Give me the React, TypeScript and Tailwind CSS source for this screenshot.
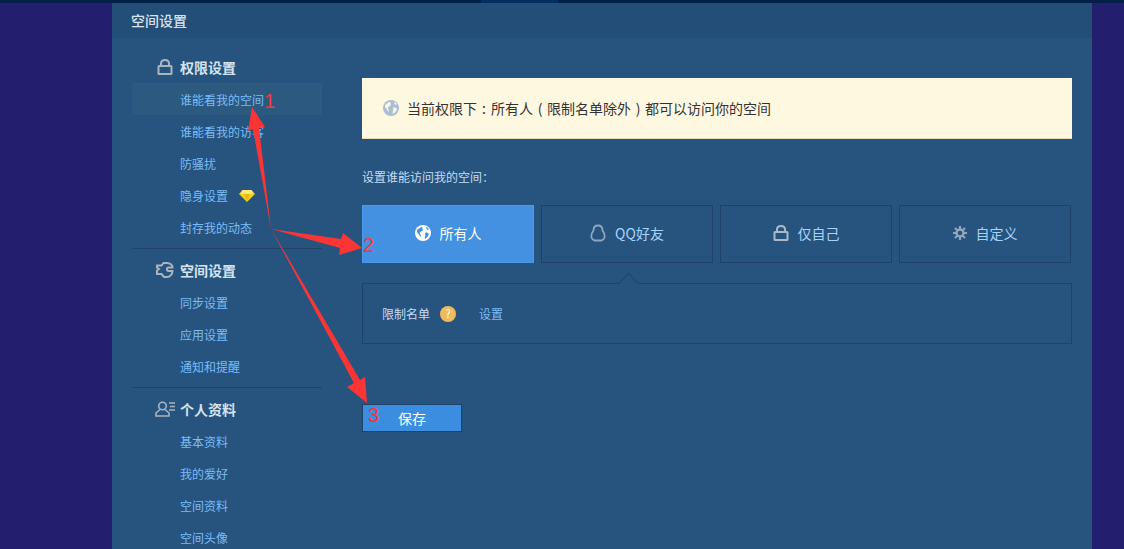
const font = { fontFamily: '"Noto Sans CJK SC", "Liberation Sans", sans-serif' }

const LockIcon = ({ color = '#a9b4bf' }: { color?: string }) => (
  <svg width="16" height="16" viewBox="0 0 16 16" fill="none" stroke={color} strokeWidth="2">
    <path d="M4 7V4.500C4 2.500 5.500 1 8 1s4 1.500 4 3.500V7" />
    <rect x="1.500" y="7" width="13" height="8" rx="0.500" />
  </svg>
)

const PluginIcon = () => (
  <svg width="18" height="16" viewBox="0 0 18 16" fill="none" stroke="#a9b4bf" strokeWidth="2">
    <path d="M1 3.500h4.500L7.500 1h3.500c3 0 5.500 2 5.500 4.500h-4c-2 0-2 3.500 0 3.500h4c0 3-2.500 6-5.500 6H8l-2.500-3H1V8.500l2-1.500-2-1.500z" />
  </svg>
)

const ProfileIcon = () => (
  <svg width="20" height="16" viewBox="0 0 20 16" fill="none" stroke="#a9b4bf" strokeWidth="1.600">
    <circle cx="7.500" cy="5" r="3.800" />
    <path d="M5 8.500 1 12v3h13v-3l-4-3.500" />
    <path d="M14 2h6M15 5.500h5M14 9h6" strokeWidth="1.500" />
  </svg>
)

const GlobeIcon = ({ fg, cut, size }: { fg: string; cut: string; size: number }) => (
  <svg width={size} height={size} viewBox="0 0 16 16">
    <circle cx="8" cy="8" r="8" fill={fg} />
    <path d="M2 5c2-1 3-3 5-3 1 1 0 2 1 3-1 2-3 1-3 3 0 1 1 2 1 4-2-1-2-3-3-4-1 0-1-2-1-3z" fill={cut} />
    <path d="M10 8c2-1 3 0 4 1-1 2-2 4-4 5-1-2 1-3 0-6zM11 2c1 0 2 1 3 2l-2 1z" fill={cut} />
  </svg>
)

const QQIcon = () => (
  <svg width="16" height="18" viewBox="0 0 16 18" fill="none" stroke="#8fa6bb" strokeWidth="1.800">
    <path d="M8 1.500c3 0 4.500 2.300 4.500 5 1.500 2 2.500 4.500 2 7-.5 1.500-1.500 2.500-3 3H4.500c-1.500-.5-2.500-1.500-3-3-.5-2.500.5-5 2-7 0-2.700 1.500-5 4.500-5z" />
  </svg>
)

const GearIcon = () => (
  <svg width="14" height="14" viewBox="0 0 14 14" fill="none" stroke="#8fa6bb">
    <circle cx="7" cy="7" r="3.500" strokeWidth="2.400" />
    <path d="M7 0v3M7 11v3M0 7h3M11 7h3M2 2l2 2M10 10l2 2M12 2l-2 2M4 10l-2 2" strokeWidth="2.200" />
  </svg>
)

const Gem = () => (
  <svg width="16" height="12" viewBox="0 0 16 12">
    <path d="M3.500 0h9L16 4 8 12 0 4z" fill="#f7cf1d" />
    <path d="M3.500 0h9L14 4H2z" fill="#ffe97a" />
    <path d="M5 4h6l-3 7z" fill="#e8b90e" />
  </svg>
)

const groups = [
  {
    title: '权限设置',
    icon: <LockIcon />,
    wrap: 'pt-[13px] pb-[5px] border-b border-[#1f4369]',
    items: ['谁能看我的空间', '谁能看我的访客', '防骚扰', '隐身设置', '封存我的动态'],
  },
  {
    title: '空间设置',
    icon: <PluginIcon />,
    wrap: 'pt-[5px] pb-[5px] border-b border-[#1f4369]',
    items: ['同步设置', '应用设置', '通知和提醒'],
  },
  {
    title: '个人资料',
    icon: <ProfileIcon />,
    wrap: 'pt-[5px]',
    items: ['基本资料', '我的爱好', '空间资料', '空间头像'],
  },
]

const options = [
  { label: '所有人', icon: <GlobeIcon fg="#ffffff" cut="#4391e0" size={16} />, active: true },
  { label: 'QQ好友', icon: <QQIcon /> },
  { label: '仅自己', icon: <LockIcon color="#a9b9c9" /> },
  { label: '自定义', icon: <GearIcon /> },
]

// full-width slot holding a thin centred punctuation mark
const Punct = ({ c }: { c: string }) => <span className="inline-block w-[14px] text-center">{c}</span>

export default function App() {
  return (
    <div className="relative h-[549px] overflow-hidden bg-[#231e6d]" style={font}>
      <div className="h-[3px] bg-[#021f47]">
        <div className="ml-[481px] h-full w-[77px] bg-[#04305f]" />
      </div>

      <div className="ml-[112px] h-[546px] w-[980px] bg-[#27547f]">
        <div className="flex h-[35px] items-center bg-[#234e77] pl-[19px] text-[14px] font-medium text-[#d5e3ef]">
          空间设置
        </div>

        <div className="flex">
          <div className="ml-5 w-[190px] shrink-0">
            {groups.map((g) => (
              <div key={g.title} className={g.wrap}>
                <div className="relative flex h-8 items-center pl-12 text-[14px] font-bold text-[#d5e3ef]">
                  <span className="absolute left-[23px] top-2 flex w-5 justify-center">{g.icon}</span>
                  {g.title}
                </div>
                {g.items.map((item) => (
                  <div
                    key={item}
                    className={`flex h-8 items-center pl-12 pt-[1px] text-[12px] text-[#7abcf7] ${item === '谁能看我的空间' ? 'bg-[#2c5980]' : ''}`}
                  >
                    {item}
                    {item === '隐身设置' && (
                      <span className="ml-[11px]">
                        <Gem />
                      </span>
                    )}
                  </div>
                ))}
              </div>
            ))}
          </div>

          <div className="ml-10 w-[710px] pt-10">
            <div className="flex h-[61px] items-center border-b border-[#e4dcb8] bg-[#fff8e1] pl-[21px] text-[14px] text-[#333333]">
              <GlobeIcon fg="#a9bfd6" cut="#fff8e1" size={16} />
              <span className="ml-2 whitespace-nowrap">
                当前权限下<Punct c=":" />所有人<Punct c="(" />限制名单除外<Punct c=")" />都可以访问你的空间
              </span>
            </div>

            <div className="mt-7 h-5 text-[12px] leading-5 text-[#c3dcf1]">设置谁能访问我的空间：</div>

            <div className="mt-[18px] flex gap-[7px]">
              {options.map((o) => (
                <div
                  key={o.label}
                  className={`flex h-[58px] w-[172px] items-center justify-center gap-[9px] border pb-[2px] text-[14px] ${
                    o.active
                      ? 'border-[#4a9bec] bg-[#4391e0] text-white'
                      : 'border-[#1e4268] text-[#a5d2f6]'
                  }`}
                >
                  {o.icon}
                  <span>{o.label}</span>
                </div>
              ))}
            </div>

            <div className="relative mt-5 flex h-[61px] items-center border border-[#1e4268] pl-[19px] text-[12px]">
              <div className="absolute left-[258px] top-[-8px] h-[15px] w-[15px] rotate-45 border-l border-t border-[#1e4268] bg-[#27547f]" />
              <span className="text-[#c3dcf1]">限制名单</span>
              <span className="ml-[10px] flex h-4 w-4 items-center justify-center rounded-full bg-[#f0bb5c] text-[11px] text-white">
                ?
              </span>
              <span className="ml-[23px] text-[#7abcf7]">设置</span>
            </div>

            <div className="mt-[60px] flex h-7 w-[100px] items-center justify-center border border-[#1e4268] bg-[#3b8de0] text-[14px] text-white">
              保存
            </div>
          </div>
        </div>
      </div>

      {/* red annotations drawn over the page */}
      <svg className="absolute left-0 top-0" width="1124" height="549" viewBox="0 0 1124 549" fill="#fb3535">
        <path d="M271 229 259 128 265 127 252 107 248 131 253 129z" />
        <path d="M271 229 341 239 343 233 362 248 339 255 340 248z" />
        <path d="M271 229 360 380 365 377 367 403 347 387 354 383z" />
      </svg>
      <span className="absolute left-[264px] top-[91px] font-['Liberation_Sans'] text-[20px] leading-5 text-[#fb3535]">1</span>
      <span className="absolute left-[363px] top-[235px] font-['Liberation_Sans'] text-[20px] leading-5 text-[#fb3535]">2</span>
      <span className="absolute left-[368px] top-[405px] font-['Liberation_Sans'] text-[20px] leading-5 text-[#fb3535]">3</span>
    </div>
  )
}
